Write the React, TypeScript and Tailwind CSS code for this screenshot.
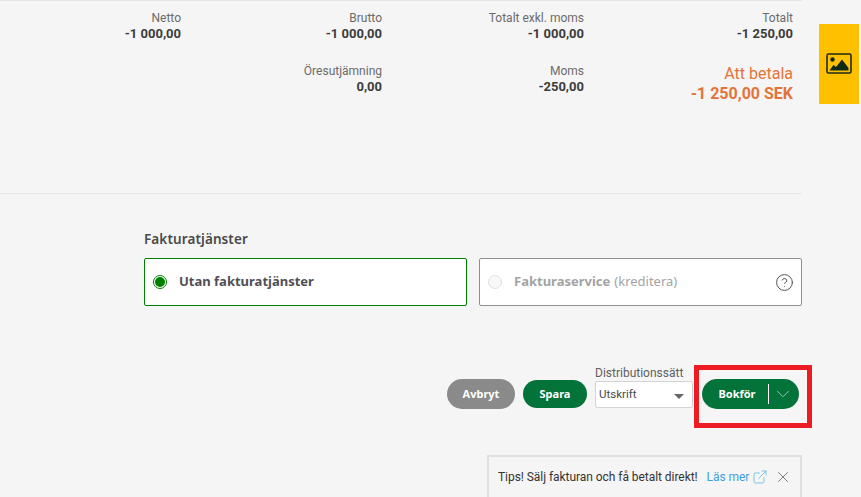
import { ChevronDown, ExternalLink, X, CircleHelp } from "lucide-react";

const totals = [
  { col: 1, label: "Netto", value: "-1 000,00" },
  { col: 2, label: "Brutto", value: "-1 000,00" },
  { col: 3, label: "Totalt exkl. moms", value: "-1 000,00" },
  { col: 4, label: "Totalt", value: "-1 250,00" },
];

function Amount({ label, value }: { label: string; value: string }) {
  return (
    <div className="text-right">
      <div className="text-[12px] leading-[16px] text-[#6b6b6b]">{label}</div>
      <div className="text-[13px] leading-[16px] font-bold text-[#3c3c3c]">{value}</div>
    </div>
  );
}

export default function App() {
  return (
    <div className="relative h-[497px] w-[861px] overflow-hidden bg-[#f5f5f5] font-['Roboto',sans-serif]">
      <div className="w-[802px]">
        {/* summering */}
        <div className="h-[194px] border-y border-y-[#e6e6e6] pt-[9px]">
          <div className="grid grid-cols-[181px_201px_202px_209px] gap-y-[21px]">
            {totals.map(t => (
              <Amount key={t.col} label={t.label} value={t.value} />
            ))}
            <div />
            <Amount label="Öresutjämning" value="0,00" />
            <Amount label="Moms" value="-250,00" />
            <div className="mt-[1px] text-right text-[#e4733a]">
              <div className="text-[16px] leading-[20px]">Att betala</div>
              <div className="text-[16px] leading-[20px] font-bold">-1 250,00 SEK</div>
            </div>
          </div>
        </div>

        {/* fakturatjänster */}
        <div className="pl-[144px] pt-[36px]">
          <div className="font-['Noto_Sans',sans-serif] text-[13.5px] leading-[18px] font-semibold tracking-[0.1px] text-[#4a4a4a]">Fakturatjänster</div>
          <div className="mt-[10px] flex gap-[12px]">
            <div className="flex h-[48px] w-[323px] items-center rounded-[2px] border border-[#008000] bg-white pl-[8px]">
              <span className="flex h-[14px] w-[14px] items-center justify-center rounded-full border border-[#008000]">
                <span className="h-[10px] w-[10px] rounded-full bg-[#008000]" />
              </span>
              <span className="ml-[12px] font-['Noto_Sans',sans-serif] text-[13px] font-bold text-[#4f4f55]">Utan fakturatjänster</span>
            </div>
            <div className="flex h-[48px] w-[323px] items-center rounded-[2px] border border-[#8f8f8f] bg-white pl-[8px] pr-[7px]">
              <span className="h-[14px] w-[14px] rounded-full border border-[#e0e0e0] bg-[#f8f8f8]" />
              <span className="ml-[12px] font-['Noto_Sans',sans-serif] text-[13px] font-bold text-[#a3a3a3]">Fakturaservice</span>
              <span className="ml-[4px] font-['Noto_Sans',sans-serif] text-[13px] text-[#a3a3a3]">(kreditera)</span>
              <CircleHelp className="ml-auto h-[19px] w-[19px] text-[#3c3c3c]" strokeWidth={1.1} />
            </div>
          </div>
        </div>

        {/* knappar */}
        <div className="mt-[60px] flex items-end justify-end pr-[3px]">
          <button className="h-[30px] w-[68px] rounded-full bg-[#8a8a8a] font-['Noto_Sans',sans-serif] text-[11px] font-bold text-white">Avbryt</button>
          <button className="mb-[1px] ml-[8px] h-[28px] w-[64px] rounded-full bg-[#04733a] font-['Noto_Sans',sans-serif] text-[11px] font-bold text-white">Spara</button>
          <div className="mb-[1px] ml-[8px] w-[98px]">
            <div className="text-[12px] leading-[15px] text-[#5f5f5f]">Distributionssätt</div>
            <div className="flex h-[27px] items-center justify-between rounded-[2px] border border-[#d4d4d4] bg-white pl-[3px] pr-[8px] pt-[1px] text-[11.5px] text-[#4a4a4a]">
              Utskrift
              <span className="mt-[2px] h-0 w-0 border-x-[5px] border-t-[5px] border-x-transparent border-t-[#666]" />
            </div>
          </div>
          <div className="ml-[9px] flex h-[30px] w-[97px] items-center rounded-full bg-[#04733a]">
            <span className="w-[66px] pl-[4px] text-center font-['Noto_Sans',sans-serif] text-[11px] font-bold text-white">Bokför</span>
            <span className="h-[20px] w-px bg-white" />
            <ChevronDown className="ml-[3px] h-[22px] w-[22px] text-[#b8d4c4]" strokeWidth={0.9} />
          </div>
        </div>

        {/* tips */}
        <div className="ml-[487px] mt-[46px] flex h-[60px] w-[315px] items-start border-2 border-[#e0e0e0] pl-[9px] pt-[12px] text-[12px] leading-[16px] tracking-[-0.05px]">
          <span className="text-[#333]">Tips! Sälj fakturan och få betalt direkt!</span>
          <span className="ml-[9px] text-[#3f9fdc]">Läs mer</span>
          <ExternalLink className="ml-[3px] h-[16px] w-[16px] text-[#4fb3e8]" strokeWidth={1.1} />
          <X className="ml-[6px] -mt-[1px] h-[18px] w-[18px] text-[#555]" strokeWidth={1} />
        </div>
      </div>

      {/* bildflik */}
      <div className="absolute left-[819px] top-[24px] flex h-[80px] w-[40px] items-center justify-center rounded-l-[1px] bg-[#ffc000]">
        <svg width="26" height="22" viewBox="0 0 26 22">
          <rect x="1" y="1" width="24" height="19" rx="1.5" fill="none" stroke="#1f2a1a" strokeWidth="1.6" />
          <circle cx="6.5" cy="6.5" r="2.2" fill="#0f2a14" />
          <path d="M3.5 17.5 L7.5 12 L10 14 L16 6.5 L22.5 15 V17.5 Z" fill="#0f2a14" />
        </svg>
      </div>

      {/* markering */}
      <div className="absolute left-[694px] top-[365px] h-[63px] w-[118px] border-[5px] border-[#ed1c24]" />
    </div>
  );
}
